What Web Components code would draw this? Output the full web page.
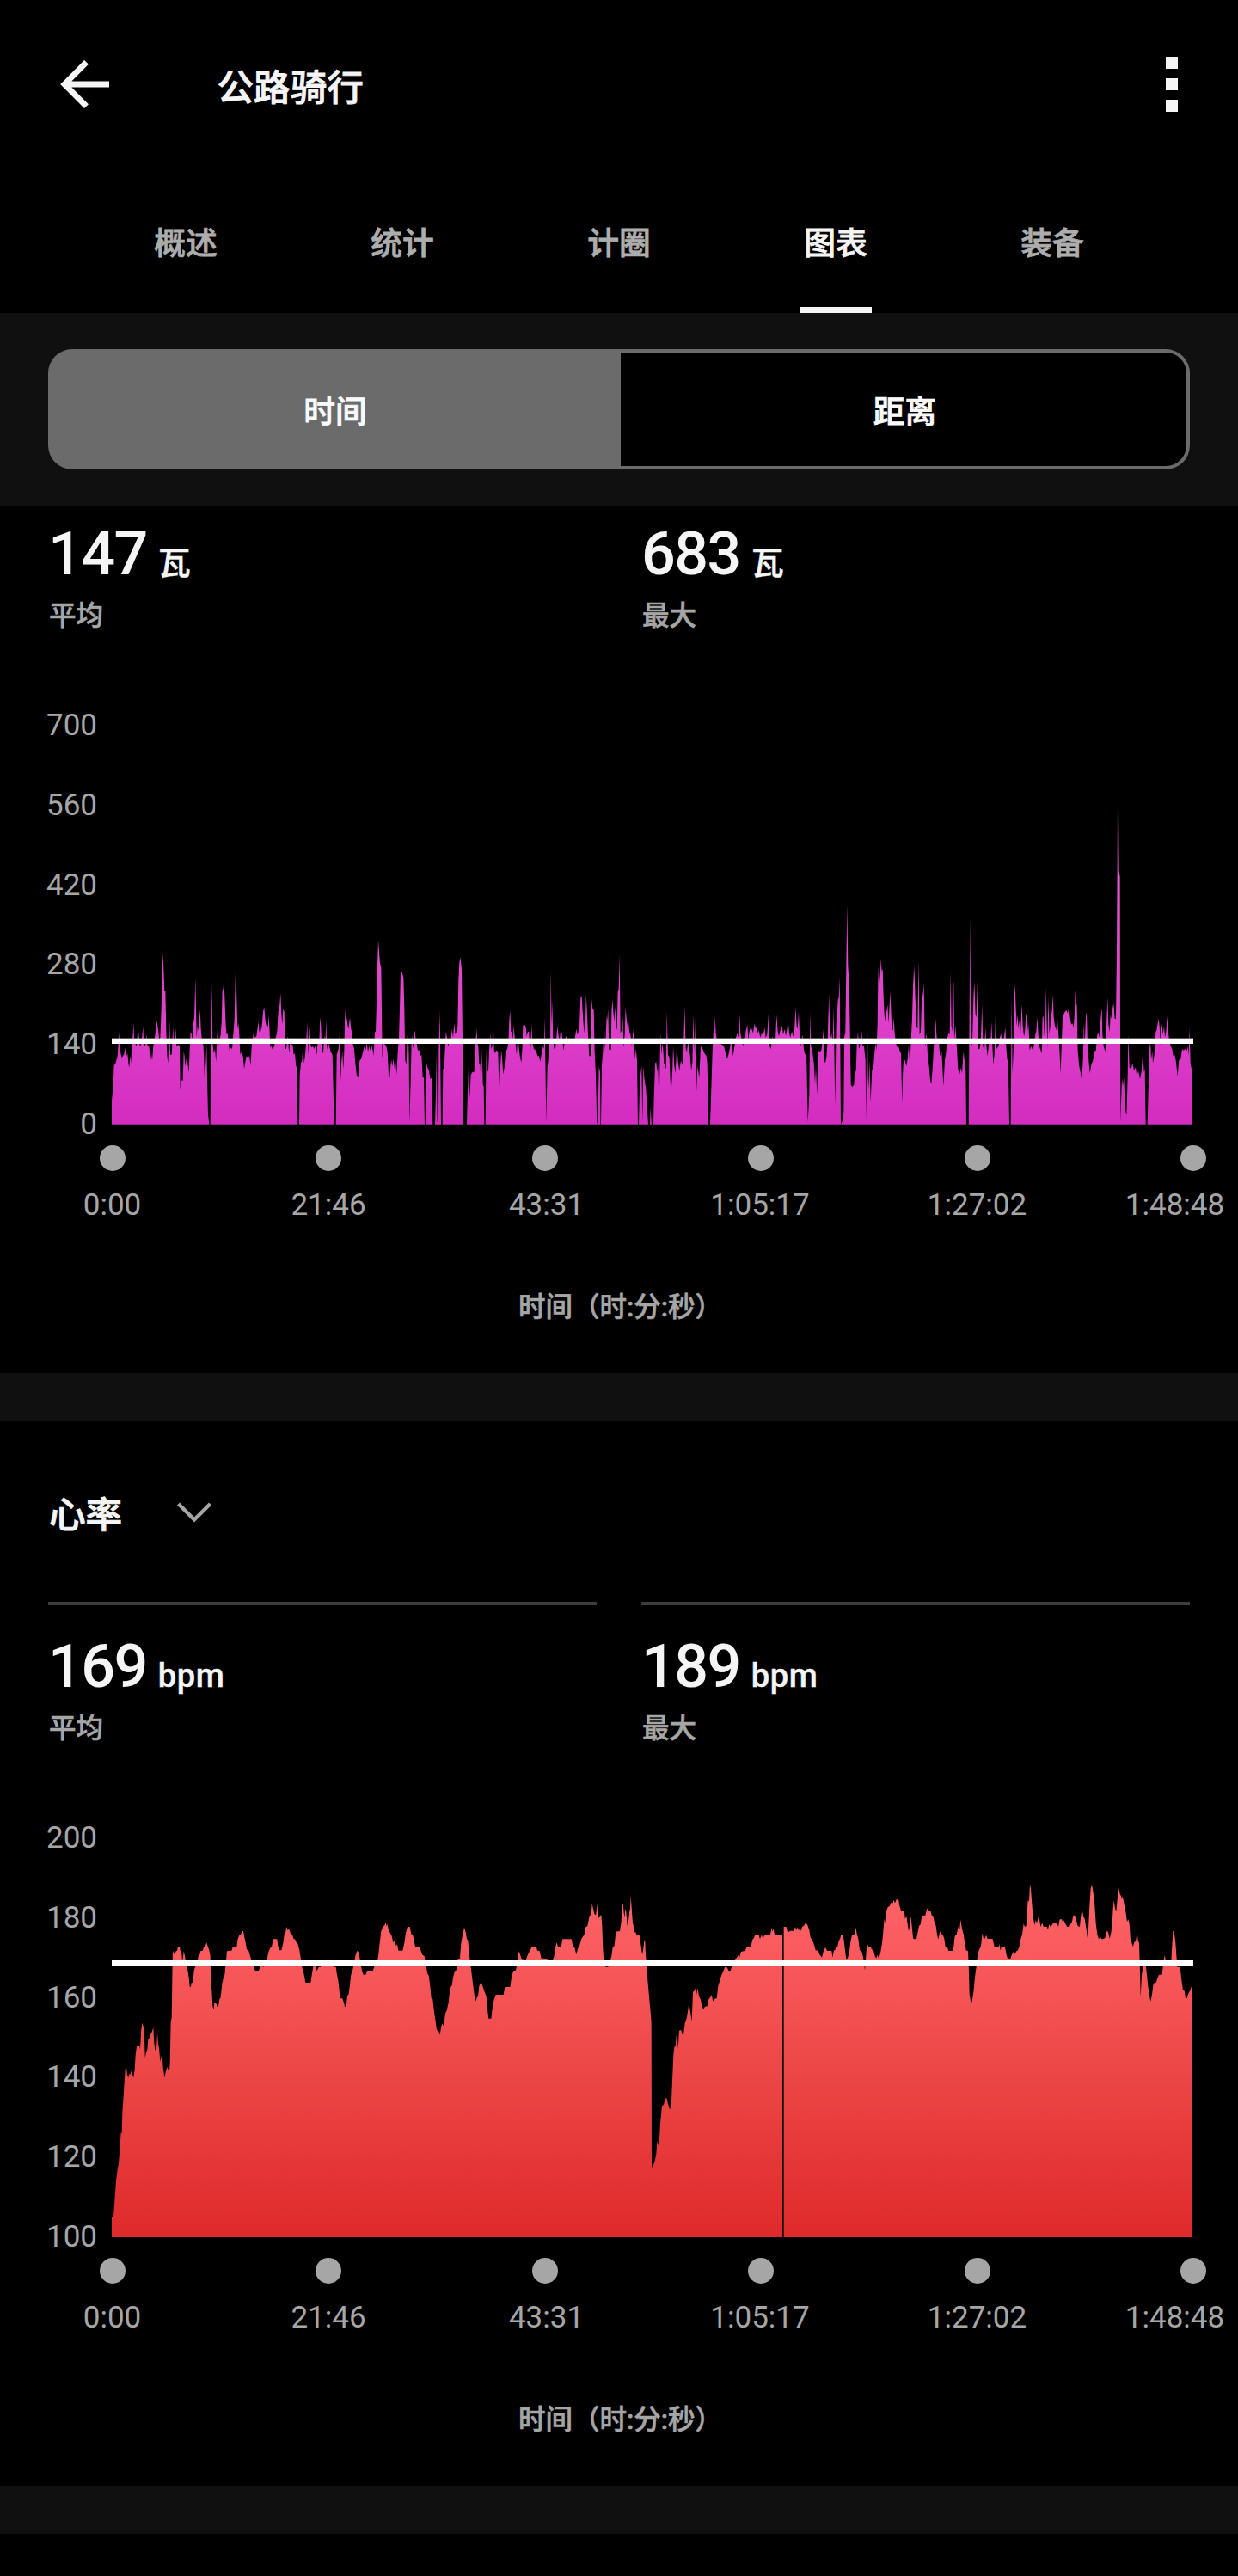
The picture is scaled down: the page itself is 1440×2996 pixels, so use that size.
<!DOCTYPE html>
<html lang="zh-CN">
<head>
<meta charset="utf-8">
<title>公路骑行</title>
<style>
  html, body { margin: 0; background: #000; }
  body { width: 1440px; height: 2996px; overflow: hidden; color: #f5f5f5; font-family: Roboto, "Noto Sans CJK SC", sans-serif; font-weight: 500; }
</style>
</head>
<body>
<activity-page></activity-page>

<script>
const define = (name, html, setup) => {
  const template = document.createElement('template');
  template.innerHTML = html;
  customElements.define(name, class extends HTMLElement {
    constructor() {
      super();
      this.attachShadow({ mode: 'open' }).append(template.content.cloneNode(true));
    }
    connectedCallback() { if (setup) setup(this, this.shadowRoot); }
  });
};

/* Outlines of the plotted areas: "x y" pairs, three samples per pixel. Each part starts at its own x offset. */
const SERIES = {
  power: {
    top: 18, bottom: 1404, average: 1112.5, colors: ['#ee6fd0', '#dc3cc8', '#d32cc0'], stops: [0, .79, 1],
    parts: [
      [0, `30 1403 30 1320 35 1270 38 1195 42 1195 50 1165 53 1120 55 1080 58 1130 62 1160 65 1170 72 1160 78 1135 82 1165 85 1155 88 1190 91 1205 94 1165 97 1190 100 1130 103 1100 106 1050 108 1100 112 1122 117 1130 120 1085 124 1085 127 1125 130 1130 136 1095 139 1062 142 1130 148 1125 151 1090 155 1130 160 1130 165 1180 168 1155 171 1180 175 1130 180 1100 184 1070 187 1040 190 1060 193 1080 196 1110 199 1100 202 1030 205 930 208 803 211 860 214 940 217 935 220 1080 223 1160 226 1190 230 1120 232 1035 234 1160 239 1160 244 1065 246 1110 250 1110 253 1068 256 1130 262 1125 267 1130 269 1285 272 1240 274 1250 278 1250 281 1150 284 1165 286 1200 290 1175 294 1185 299 1222 302 1140 305 1080 308 1085 311 1110 315 1050 318 1030 322 895 326 1100 329 1060 332 1075 338 1003 341 1070 345 1110 350 1130 354 1245 358 1190 361 1120 363 1240 366 1370 370 1403 374 1403 376 1120 379 915 382 1120 386 1155 390 1140 394 1185 397 1068 399 1130 403 1125 410 1090 413 1050 416 935 419 930 421 897 424 960 428 1060 431 1090 434 1085 437 1110 441 1150 444 1135 450 1140 454 1090 458 1040 461 900 463 845 466 960 469 1070 472 1050 475 1090 478 1160 481 1150 484 1165 488 1165 492 1210 497 1180 500 1165 506 1170 510 1165 515 1198 518 1130 521 1105 525 1085 529 1100 535 1095 539 1065 542 1045 545 1085 548 1050 551 1080 555 1050 558 1010 562 995 566 1040 569 1060 572 1050 575 1065 578 1022 581 1085 583 1135 587 1130 591 1142 597 1130 602 1100 607 1080 611 1010 615 995 619 945 622 1020 625 1055 628 1000 632 1010 635 1140 639 1140 644 1095 649 1155 653 1100 657 1125 661 1125 665 1160 669 1155 673 1200 676 1205 679 1403 684 1403 686 1230 690 1190 694 1180 697 1130 701 1190 705 1160 709 1110 712 1045 715 1160 718 1090 721 1065 724 1130 728 1135 732 1130 736 1140 740 1130 745 1160 748 1125 752 1100 754 1120 757 1028 760 1060 763 1150 768 1155 772 1090 775 1130 778 1040 781 1145 785 1110 789 1130 794 1150 800 1160 803 1280 806 1403 812 1403 815 1160 821 1140 825 1090 828 1255 832 1180 835 1150 838 1210 841 1150 844 995 847 1060 850 1030 853 1055 856 1070 861 1030 865 1070 868 1080 871 1120 876 1140 880 1190 885 1235 890 1240 895 1180 900 1175 904 1160 909 1140 913 1125 917 1145 920 1115 924 1150 928 1130 932 1145 936 1125 942 1150 944 1165 948 1080 951 1080 954 980 957 850 960 760 963 800 966 840 970 855 972 1000 974 1175 978 1120 984 1125 988 1130 992 1150 996 1230 1000 1240 1005 1175 1009 1200 1013 1175 1017 1210 1020 1180 1024 1230 1028 1150 1032 1100 1035 1000 1038 870 1042 870 1048 890 1051 1000 1054 1180 1058 1195 1061 1100 1064 1060 1067 1180 1069 1395 1073 1250 1076 1115 1079 1090 1080 1140 1083 1120 1085 1075 1088 1080 1091 1110 1094 1120 1098 1145 1104 1145 1108 1165 1111 1160 1115 1240 1119 1240 1122 1403 1125 1403 1128 1190 1132 1205 1137 1215 1141 1245 1147 1240 1150 1403 1158 1403 1161 1300 1163 1150 1166 1395 1170 1390 1171 1150 1175 1005 1177 1200 1179 1403 1184 1403 1186 1210 1190 1205 1193 1140 1196 1080 1200 1100 1204 1130 1207 1120 1212 1120 1217 1070 1221 1100 1225 1050 1229 1090 1234 1075 1237 1060 1240 900 1243 840 1246 820 1251 860 1254 1110 1257 1403`],
      [1260, `9 1403 12 1290 15 1200 19 1310 23 1230 29 1220 35 1220 39 1130 43 1068 46 1120 49 1130 52 1190 56 1195 59 1280 62 1140 65 1265 68 1270 70 1403 74 1403 77 1140 80 1220 84 1215 87 1150 91 1085 94 1140 98 1130 100 1010 104 1145 108 1155 112 1145 118 1150 122 1300 126 1200 129 1145 132 1170 136 1228 140 1205 144 1150 150 1140 154 1120 157 1040 160 1005 163 1080 167 1080 170 1110 173 1055 176 1100 179 1120 183 1160 187 1085 191 1140 195 1170 199 1188 203 1130 205 1055 208 1065 212 1055 215 1065 218 1095 222 1080 226 1080 230 1175 235 1055 238 1120 243 1140 250 1145 256 1165 261 1165 265 1185 270 1155 275 1130 278 1140 280 1030 283 1170 286 1395 290 1200 293 1180 296 1110 300 1100 302 870 305 1060 307 970 310 1110 313 1135 317 1150 321 1110 325 1060 329 1095 333 1110 337 1065 341 1090 346 1145 350 1120 355 1095 360 1105 368 1115 378 1115 385 1110 388 1090 391 1070 395 1090 398 1080 402 1060 406 960 410 955 413 1010 416 1055 420 1085 423 1040 425 950 428 1000 432 1090 436 1165 441 1165 445 965 448 1000 452 1005 455 1150 459 1230 463 1403 466 1390 470 1200 474 1220 475 1403 477 1403 480 1195 484 1150 488 1030 491 1145 494 1100 497 1025 499 1040 502 1000 505 1140 508 1150 512 1140 514 1010 517 968 520 1010 524 1045 526 990 530 1060 533 1075 536 940 539 930 542 810 545 1085 549 1075 553 1030 556 1135 560 1090 563 995 567 1040 570 1060 573 1045 576 1080 580 1090 585 1130 590 1070 593 1120 596 1175 599 1140 603 1180 606 1403 609 1403 612 1280 616 1220 619 1200 622 1395 625 1200 628 1240 634 1280 638 1340 642 1403 648 1403 650 1345 654 1403 660 1403 662 1310 666 1190 670 1185 673 1220 676 1200 680 1340 683 1160 685 1085 689 1160 691 1120 694 1140 697 1190 704 1210 707 1010 711 1160 716 1170 719 1250 722 1290 726 1225 729 1130 733 1200 737 1225 742 1125 746 1185 751 1215 756 1180 760 1195 764 1190 769 990 773 1140 777 1150 781 1110 784 1140 788 1160 792 1215 796 1190 799 1020 803 1150 805 1030 809 1315 814 1200 820 1240 825 1130 832 1140 838 1155 845 1165 848 1190 852 1403 858 1403 862 1280 866 1150 870 1070 872 1110 875 1025 878 1085 882 1110 890 1120 900 1125 906 1130 911 1150 917 1175 922 1160 928 1130 931 1095 935 1140 938 1165 943 1130 948 1100 953 1085 957 1100 961 1020 964 1085 968 1110 973 1130 976 1095 980 1130 982 1080 988 1055 991 1110 995 1080 999 1065 1003 1070 1008 1085 1013 1050 1017 1070 1020 1060 1024 1085 1028 1075 1033 1100 1038 1085 1043 1095 1048 1065 1052 1100 1057 1090 1062 1015 1065 1130 1070 1140 1075 1095 1080 1125 1086 1110 1090 1020 1094 1080 1098 1095 1104 1070 1109 1060 1113 1090 1118 1070 1122 1095 1126 1075 1130 1040 1134 1085 1138 1100 1143 1080 1150 1100 1153 1060 1156 995 1160 1060 1163 1070 1167 1010 1170 1085 1174 1130 1180 1090 1185 1140 1189 1160 1194 1150 1199 1395 1204 1300 1207 1010 1210 1130 1215 1150 1220 1190 1224 1260 1227 1200 1231 1300 1235 1145 1240 1150 1246 1145 1250 1115 1253 1070 1257 1185`],
      [2520, `0 1188 4 1170 8 1110 10 1040 13 948 16 1080 19 1100 22 1085 26 1130 29 990 34 1340 38 1050 41 1020 44 970 47 960 50 890 52 1130 54 1403 60 1390 64 1360 66 1100 70 1080 73 850 76 635 79 850 83 910 86 1080 89 1265 94 1272 100 1265 103 1210 107 1220 110 1120 114 1080 117 1140 121 1130 123 1090 127 1080 130 1130 135 1130 140 1180 142 1390 146 980 149 1240 151 1280 154 1180 158 1325 163 1210 167 1215 172 1150 175 1120 178 1145 182 1060 184 900 187 820 190 910 194 825 197 870 200 860 203 960 206 1020 208 1045 212 1000 214 1010 217 985 221 1050 226 940 229 1000 232 1070 236 1075 239 1030 242 1085 245 1110 250 1135 254 1125 259 1145 264 1155 268 1330 270 1240 273 1175 278 1180 283 1200 287 1175 291 1125 295 1200 299 1110 303 1030 306 920 310 850 314 960 318 1060 322 1070 325 830 329 1090 333 1080 337 940 340 955 344 915 347 1110 350 1130 353 1080 358 1180 362 1200 366 1250 370 1262 374 1210 378 1140 382 1090 385 1035 388 1090 391 1120 395 1100 400 1165 406 1150 412 1270 417 1180 421 1155 426 1100 430 1085 434 1090 437 870 440 1060 443 1080 444 908 448 908 450 1110 454 1060 458 1120 463 1210 468 1230 473 1205 477 1225 482 1150 487 1190 490 1220 492 1403 500 1403 503 1000 505 675 508 1135 513 1120 517 960 520 905 524 1020 527 1030 531 900 534 1140 538 1140 542 1120 547 985 550 1130 555 1145 559 1065 562 1130 566 1165 572 1110 576 1130 580 1045 583 1130 586 1195 590 1160 595 985 598 1140 604 1130 609 1100 613 1085 617 1120 622 1110 628 1065 631 1130 635 1180 638 1170 642 1403 647 1403 650 960 653 1225 657 1130 659 960 662 915 665 1000 668 1060 671 1020 674 1070 677 1040 681 1085 684 1020 686 985 689 1060 693 1095 696 1085 700 1020 704 1015 707 1080 709 1050 713 1145 718 1130 724 1145 728 1125 733 1090 736 1080 740 1030 743 1090 748 1135 755 1155 758 1030 761 1025 765 1100 767 1110 770 925 775 1140 778 960 782 1090 785 1060 788 990 790 1020 794 950 797 1030 801 1060 806 1075 809 1020 813 1080 817 1140 821 1225 825 1110 828 1030 832 1020 836 1010 841 1005 846 1015 850 995 854 1030 858 1055 862 1050 866 1065 869 1030 872 935 875 975 878 990 881 1150 886 1200 890 1220 895 1250 899 1180 902 1050 905 1130 909 1030 912 1010 915 1130 919 1180 923 1225 928 1195 934 1180 938 1150 944 1145 949 1090 953 1085 956 1100 959 1060 962 1020 965 1000 967 1090 971 1130 977 1150 981 1060 985 960 988 1055 992 1080 995 1020 1000 1040 1002 1000 1006 980 1010 1035 1014 1035 1017 800 1019 500 1021 70 1023 300 1025 520 1028 540 1029 1100 1030 1395 1035 1240 1038 1270 1042 1240 1046 1350 1051 1372 1055 1240 1057 1090 1061 1205 1067 1210 1072 1190 1077 1215 1083 1205 1087 1235 1092 1215 1098 1245 1103 1220 1108 1150 1112 1220 1115 1210 1118 1403 1124 1403 1128 1250 1131 1140 1134 1110 1137 1175 1141 1150 1143 1190 1148 1160 1153 1080 1156 1075 1160 1050 1163 1035 1166 1060 1170 1130 1174 1050 1178 1090 1182 1060 1185 1100 1189 1080 1193 1025 1197 1085 1200 1110 1205 1130 1210 1140 1214 1165 1219 1160 1223 1180 1229 1235 1234 1180 1240 1175 1245 1140 1250 1145 1256 1140 1262 1145 1266 1130 1268 1165 1271 1065 1274 1190 1279 1215 1281 1403`]
    ]
  },
  heart: {
    top: -60, bottom: 1326, average: 368.5, colors: ['#ff6b72', '#f9595c', '#ed4747', '#e02b2c'], stops: [0, .3, .57, .98],
    parts: [
      [0, `30 1326 30 1257 36 1255 40 1200 45 1130 50 1090 54 1070 58 1020 62 960 65 965 67 890 70 850 73 800 77 740 81 732 84 760 88 768 92 755 95 758 98 745 101 757 106 768 110 740 113 690 117 660 127 660 129 670 133 600 136 578 140 590 143 600 146 700 150 680 154 672 157 635 162 630 166 618 170 610 175 595 178 650 181 673 186 673 189 612 192 655 195 665 199 713 203 695 206 686 209 735 214 768 218 750 223 732 227 742 230 755 233 720 236 575 239 560 242 360 243 326 249 340 254 328 258 326 261 313 267 313 269 326 273 330 276 360 279 350 281 328 285 345 290 375 295 395 299 420 302 452 306 452 308 438 313 438 317 395 322 380 328 375 332 345 337 340 340 327 347 327 351 314 356 312 361 298 366 314 370 325 374 345 376 465 379 465 382 520 386 532 388 508 394 508 397 521 402 521 406 495 410 490 415 440 420 420 424 410 428 370 432 328 448 326 452 314 466 314 470 285 475 272 480 270 485 258 489 258 493 280 497 298 501 322 508 327 513 345 520 370 527 385 530 396 543 396 548 383 553 375 558 383 568 378 574 345 578 328 584 315 588 314 593 286 607 286 610 310 615 325 622 325 628 300 632 270 636 265 640 242 644 256 648 250 654 267 660 270 664 285 669 286 675 299 679 302 684 320 689 350 694 385 700 405 706 438 724 438 729 405 735 370 741 383 746 397 752 383 758 383 765 378 776 378 778 355 782 370 806 383 812 383 816 410 820 430 824 465 827 492 835 493 840 508 843 522 848 520 852 485 857 477 861 445 865 410 870 397 875 370 880 345 886 327 890 330 895 350 899 378 904 398 908 410 916 410 921 396 941 396 947 380 954 375 960 345 965 300 970 258 974 250 976 232 980 242 986 228 989 242 991 232 995 250 1000 262 1007 275 1012 298 1018 290 1022 310 1026 304 1030 326 1045 326 1051 300 1056 265 1062 243 1070 243 1075 268 1081 272 1089 313 1103 314 1108 325 1114 341 1121 345 1126 375 1132 407 1136 412 1141 450 1145 492 1150 495 1155 540 1160 573 1164 603 1170 605 1175 620 1179 595 1183 580 1187 588 1190 575 1194 545 1199 535 1205 508 1208 480 1213 452 1217 448 1221 420 1227 397 1232 395 1237 355 1245 353 1249 300 1255 268 1260 245 1265 262 1269 285 1273 290 1277 335`],
      [1260, `20 360 25 400 30 440 35 480 40 503 44 490 48 485 52 450 57 438 61 440 66 455 71 470 77 485 81 530 85 563 94 563 98 530 103 500 110 480 137 480 142 453 160 453 165 420 171 397 180 395 185 370 190 328 195 340 200 355 215 358 222 340 228 328 235 314 252 314 255 326 263 327 269 353 290 354 292 365 306 365 314 345 318 315 323 297 327 312 338 312 343 286 374 286 379 310 385 315 391 340 396 320 402 310 409 285 419 270 422 245 430 240 437 205 443 200 446 162 450 180 455 200 460 200 463 162 467 215 473 205 478 202 481 240 484 320 488 375 493 383 502 383 508 365 514 345 518 315 524 310 529 260 543 258 548 225 551 170 554 160 557 195 560 210 562 180 565 190 569 240 573 225 577 185 579 180 581 135 585 190 588 230 591 240 594 262 598 262 601 271 611 271 616 305 621 340 625 320 628 290 631 290 633 340 637 380 640 430 645 485 650 540 653 580 654 1083 660 1075 665 1060 670 1035 673 990 677 1005 680 1000 684 930 690 868 695 865 700 850 703 840 707 842 711 860 717 880 722 870 726 780 730 690 733 662 737 660 740 625 743 620 746 670 750 605 757 603 760 618 765 620 770 580 776 562 780 540 784 508 789 540 794 573 798 470 804 465 807 455 810 480 815 458 819 485 825 497 830 522 835 530 840 521 848 520 853 495 858 490 863 480 868 503 873 495 881 492 886 450 892 430 898 410 904 397 910 383 917 385 923 397 929 396 934 380 940 365 946 355 952 350 956 342 960 350 966 330 980 326 985 314 1000 313 1006 287 1011 282 1015 270 1027 270 1032 285 1038 270 1042 285 1048 271 1068 270 1073 245 1076 260 1079 250 1083 271 1110 271 1110 1326 1115 1326 1115 243 1124 243 1127 258 1133 262 1136 257 1150 257 1155 243 1159 255 1164 243 1167 257 1171 243 1175 258 1179 243 1185 240 1190 230 1193 240 1196 232 1200 243 1204 255 1208 280 1215 290 1219 300 1226 325 1235 327 1240 340 1248 350 1254 327`],
      [2520, `0 315 3 320 6 327 22 327 25 350 30 325 34 325 37 312 41 320 46 295 52 283 55 270 62 270 66 300 70 335 73 355 77 354 83 335 88 295 93 272 101 270 104 258 106 245 110 268 115 285 120 325 126 327 131 345 135 365 138 395 141 355 146 300 150 312 158 312 162 322 168 325 173 345 178 353 182 342 187 355 193 330 198 300 202 260 206 215 208 230 212 190 218 175 225 170 228 160 236 160 238 150 243 160 248 148 255 147 259 170 264 187 272 188 275 180 278 215 283 205 288 240 291 258 295 240 298 205 302 240 306 280 308 286 318 285 323 260 327 240 332 235 337 204 349 203 353 187 356 178 360 187 368 190 371 203 376 205 380 225 386 240 390 270 394 287 400 258 404 268 411 272 415 285 419 313 426 316 430 327 446 327 452 275 458 270 464 243 469 250 472 218 477 250 482 268 487 300 491 325 498 328 501 400 503 480 508 507 512 505 517 470 523 410 528 375 531 345 536 325 543 310 548 265 552 285 556 285 562 272 565 284 584 286 590 313 605 313 608 303 611 326 614 314 627 314 632 340 636 353 646 354 650 343 655 330 660 340 667 328 672 325 677 312 682 285 687 270 692 232 696 243 701 240 707 150 711 155 714 95 717 110 720 150 724 200 730 238 734 220 738 230 745 203 751 243 757 230 762 243 773 243 777 252 781 235 786 243 794 232 809 230 813 243 818 217 825 217 829 228 833 220 836 230 844 243 852 243 857 230 861 225 865 203 871 203 877 225 881 240 888 243 891 210 896 180 900 205 905 215 910 245 915 283 918 250 922 170 926 110 930 95 935 125 940 170 944 230 949 270 954 285 960 278 963 286 972 285 977 280 982 258 987 260 992 285 997 265 1001 230 1004 180 1007 150 1011 180 1015 188 1020 140 1025 108 1028 130 1032 135 1035 148 1037 135 1042 160 1048 190 1053 225 1057 217 1061 230 1065 290 1068 295 1073 313 1079 295 1083 295 1088 260 1091 290 1095 300 1098 400 1100 490 1104 410 1109 380 1113 357 1117 365 1121 400 1126 450 1131 485 1135 503 1140 480 1145 440 1154 438 1158 425 1164 410 1175 410 1180 365 1184 342 1190 370 1200 380 1207 365 1210 310 1213 258 1217 258 1222 300 1228 383 1238 384 1243 430 1248 465 1253 466 1257 493 1262 492 1267 475 1273 465 1277 452 1281 450 1281 1326`]
    ]
  }
};

define('app-bar', `
  <style>
    :host { display: flex; align-items: center; height: 197px; padding: 0 70px; box-sizing: border-box; }
    .title { flex: 1; margin: 7px 0 0 124.500px; font-size: 42.6px; line-height: 60px; -webkit-text-stroke: .9px currentColor; }
    svg { display: block; margin-top: -1px; }
    .more { display: grid; gap: 10.75px; margin-top: -1px; }
    .more i { width: 14px; height: 14px; background: #f5f5f5; }
  </style>
  <svg width="58" height="56" viewBox="0 0 58 56"><path d="M30.5 2.3 5 28l25.500 25.700M5 28H57" fill="none" stroke="#f5f5f5" stroke-width="6.800"/></svg>
  <div class="title"><slot></slot></div>
  <div class="more"><i></i><i></i><i></i></div>`);

define('tab-item', `
  <style>
    :host { display: flex; flex: 1; flex-direction: column; align-items: center; justify-content: space-between; font-size: 36.75px; line-height: 50px; color: #adadad; padding-top: 62px; -webkit-text-stroke: .8px currentColor; }
    :host([active]) { color: #f5f5f5; }
    .bar { width: 84px; height: 7px; }
    :host([active]) .bar { background: #f5f5f5; }
  </style>
  <span><slot></slot></span><div class="bar"></div>`);

define('tab-strip', `
  <style>:host { display: flex; height: 167px; padding: 0 90px; }</style><slot></slot>`);

define('segmented-control', `
  <style>
    :host { display: block; background: #101010; padding: 42px 56px; height: 224px; box-sizing: border-box; }
    .frame { display: flex; height: 140px; padding: 4px; box-sizing: border-box; border-radius: 28px; background: #6b6b6b; color: #fafafa; font-size: 36.75px; -webkit-text-stroke: .8px currentColor; }
    .frame div { display: flex; align-items: center; justify-content: center; line-height: 50px; box-sizing: border-box; padding-top: 8px; }
    .on { width: 662px; padding-right: 2px; }
    .off { flex: 1; padding-left: 3px; background: #000; border-radius: 0 24px 24px 0; }
  </style>
  <div class="frame"><div class="on"><slot name="on"></slot></div><div class="off"><slot name="off"></slot></div></div>`);

define('section-gap', `<style>:host { display: block; height: 56px; background: #101010; }</style>`);

define('metric-title', `
  <style>
    :host { display: flex; align-items: center; gap: 62px; height: 210px; padding: 0 57px; box-sizing: border-box; font-size: 42.6px; line-height: 60px; }
    span { margin-top: 7px; -webkit-text-stroke: .9px currentColor; }
    svg { display: block; margin-top: 1px; }
  </style>
  <span><slot></slot></span>
  <svg width="44" height="26" viewBox="0 0 44 26"><path d="M3.500 3 22 21.500 40.500 3" fill="none" stroke="#a6a6a6" stroke-width="4.400"/></svg>`);

define('metric-rules', `
  <style>
    :host { display: flex; gap: 52px; padding: 0 56px 15px; }
    i { flex: 1; height: 4px; background: #3d3d3d; }
  </style><i></i><i></i>`);

define('metric-stat', `
  <style>
    :host { display: block; flex: 1; }
    .value { display: flex; align-items: baseline; gap: 13px; height: 82px; font-size: 70px; line-height: 82px; letter-spacing: -1.5px; }
    .unit { font-size: 38px; line-height: 44px; letter-spacing: .6px; -webkit-text-stroke: .4px currentColor; }
    .label { margin: 12px 0 0 1px; font-size: 31.5px; line-height: 40px; color: #a6a6a6; -webkit-text-stroke: .6px currentColor; }
  </style>
  <div class="value"><span><slot></slot></span><span class="unit"><slot name="unit"></slot></span></div>
  <div class="label"><slot name="label"></slot></div>`);

define('stat-row', `<style>:host { display: flex; gap: 52px; height: 243px; padding: 15px 56px 0; }</style><slot></slot>`);

define('area-chart', `
  <style>
    :host { display: block; font-weight: 400; font-size: 35px; color: #a6a6a6; }
    .main { display: grid; grid-template-columns: 113px 1258px; column-gap: 17px; height: 462px; }
    .ticks { display: flex; flex-direction: column; justify-content: space-between; height: 464px; margin-top: -2.5px; }
    .ticks span { display: flex; align-items: center; justify-content: flex-end; height: 0; }
    svg { display: block; width: 1258px; height: 462px; overflow: visible; }
    .times { display: flex; justify-content: space-between; margin: 24px 52px 0 130.500px; height: 150px; }
    .times div { display: flex; flex-direction: column; align-items: center; width: 0; white-space: nowrap; }
    .times i { flex: none; width: 30px; height: 30px; border-radius: 50%; background: #a6a6a6; }
    .times span { margin-top: 19px; line-height: 41px; }
    .times div:nth-child(3) span { margin-left: 4px; }
    .times div:nth-child(4) span { margin-right: 2px; }
    .times div:last-child span { margin-right: 43px; }
    .caption { text-align: center; font-size: 31.5px; line-height: 44px; font-weight: 500; margin: 17px 0 0 3px; -webkit-text-stroke: .6px currentColor; }
  </style>
  <div class="main"><div class="ticks"></div><div class="plot"></div></div>
  <div class="times"></div>
  <div class="caption"><slot></slot></div>`,
  (host, root) => {
    const series = SERIES[host.getAttribute('series')];
    root.querySelector('.ticks').innerHTML = host.getAttribute('ticks').split(' ').map(t => `<span>${t}</span>`).join('');
    root.querySelector('.times').innerHTML = ['0:00', '21:46', '43:31', '1:05:17', '1:27:02', '1:48:48'].map(t => `<div><i></i><span>${t}</span></div>`).join('');
    const points = series.parts.map(([offset, data]) =>
      data.split(' ').map((n, i) => i % 2 ? +n : +n + offset).join(' ')).join(' ');
    const stops = series.colors.map((c, i) => `<stop offset="${series.stops[i]}" stop-color="${c}"/>`).join('');
    root.querySelector('.plot').innerHTML = `
      <svg viewBox="30 ${series.top} 3774 1386" preserveAspectRatio="none">
        <defs><linearGradient id="fill" gradientUnits="userSpaceOnUse" x1="0" y1="${series.top}" x2="0" y2="${series.bottom}">${stops}</linearGradient></defs>
        <polygon points="${points}" fill="url(#fill)"/>
        <rect x="30" y="${series.average - 9.5}" width="3774" height="19" fill="#fff"/>
      </svg>`;
  });

define('activity-page', `
  <style>
    :host { display: block; width: 1440px; }
    .power { height: 1009px; }
    .heart { height: 1238px; }
  </style>
  <app-bar>公路骑行</app-bar>
  <tab-strip>
    <tab-item>概述</tab-item><tab-item>统计</tab-item><tab-item>计圈</tab-item><tab-item active>图表</tab-item><tab-item>装备</tab-item>
  </tab-strip>
  <segmented-control><span slot="on">时间</span><span slot="off">距离</span></segmented-control>
  <section class="power">
    <stat-row>
      <metric-stat>147<span slot="unit">瓦</span><span slot="label">平均</span></metric-stat>
      <metric-stat>683<span slot="unit">瓦</span><span slot="label">最大</span></metric-stat>
    </stat-row>
    <area-chart series="power" ticks="700 560 420 280 140 0">时间（时:分:秒）</area-chart>
  </section>
  <section-gap></section-gap>
  <section class="heart">
    <metric-title>心率</metric-title>
    <metric-rules></metric-rules>
    <stat-row>
      <metric-stat>169<span slot="unit">bpm</span><span slot="label">平均</span></metric-stat>
      <metric-stat>189<span slot="unit">bpm</span><span slot="label">最大</span></metric-stat>
    </stat-row>
    <area-chart series="heart" ticks="200 180 160 140 120 100">时间（时:分:秒）</area-chart>
  </section>
  <section-gap></section-gap>`);
</script>
</body>
</html>
